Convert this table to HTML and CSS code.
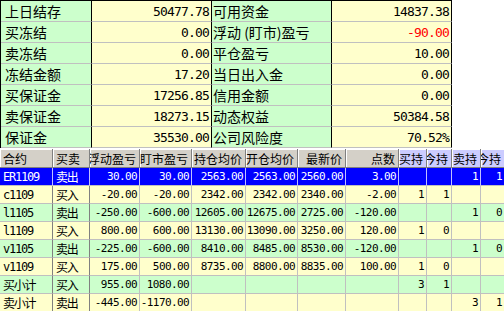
FILE: index.html
```html
<!DOCTYPE html>
<html lang="zh">
<head>
<meta charset="utf-8">
<title>资金</title>
<link rel="stylesheet" href="styles.css">
</head>
<body>
<div class="summary">
  <div class="lbl">上日结存</div><div class="val">50477.78</div><div class="lbl lbl2">可用资金</div><div class="val">14837.38</div>
  <div class="lbl">买冻结</div><div class="val">0.00</div><div class="lbl lbl2">浮动 (盯市)盈亏</div><div class="val neg">-90.00</div>
  <div class="lbl">卖冻结</div><div class="val">0.00</div><div class="lbl lbl2">平仓盈亏</div><div class="val">10.00</div>
  <div class="lbl">冻结金额</div><div class="val">17.20</div><div class="lbl lbl2">当日出入金</div><div class="val">0.00</div>
  <div class="lbl">买保证金</div><div class="val">17256.85</div><div class="lbl lbl2">信用金额</div><div class="val">0.00</div>
  <div class="lbl">卖保证金</div><div class="val">18273.15</div><div class="lbl lbl2">动态权益</div><div class="val">50384.58</div>
  <div class="lbl">保证金</div><div class="val">35530.00</div><div class="lbl lbl2">公司风险度</div><div class="val">70.52%</div>
</div>

<div class="grid">
  <div class="hd left dk">合约</div>
  <div class="hd left dk">买卖</div>
  <div class="hd">浮动盈亏</div>
  <div class="hd">盯市盈亏</div>
  <div class="hd">持仓均价</div>
  <div class="hd">开仓均价</div>
  <div class="hd">最新价</div>
  <div class="hd">点数</div>
  <div class="hd lav">买持</div>
  <div class="hd lav">今持</div>
  <div class="hd lav">卖持</div>
  <div class="hd lav">今持</div>

  <div class="c sel t dk">ER1109</div><div class="c sel t dk">卖出</div><div class="c sel">30.00</div><div class="c sel">30.00</div><div class="c sel">2563.00</div><div class="c sel">2563.00</div><div class="c sel">2560.00</div><div class="c sel">3.00</div><div class="c sel"></div><div class="c sel"></div><div class="c sel">1</div><div class="c sel">1</div>

  <div class="c y t dk">c1109</div><div class="c y t dk">买入</div><div class="c y">-20.00</div><div class="c y">-20.00</div><div class="c y">2342.00</div><div class="c y">2342.00</div><div class="c y">2340.00</div><div class="c y">-2.00</div><div class="c y">1</div><div class="c y">1</div><div class="c y"></div><div class="c y"></div>

  <div class="c g t dk">l1105</div><div class="c g t dk">卖出</div><div class="c g">-250.00</div><div class="c g">-600.00</div><div class="c g">12605.00</div><div class="c g">12675.00</div><div class="c g">2725.00</div><div class="c g">-120.00</div><div class="c g"></div><div class="c g"></div><div class="c g">1</div><div class="c g">0</div>

  <div class="c y t dk">l1109</div><div class="c y t dk">买入</div><div class="c y">800.00</div><div class="c y">600.00</div><div class="c y">13130.00</div><div class="c y">13090.00</div><div class="c y">3250.00</div><div class="c y">120.00</div><div class="c y">1</div><div class="c y">0</div><div class="c y"></div><div class="c y"></div>

  <div class="c g t dk">v1105</div><div class="c g t dk">卖出</div><div class="c g">-225.00</div><div class="c g">-600.00</div><div class="c g">8410.00</div><div class="c g">8485.00</div><div class="c g">8530.00</div><div class="c g">-120.00</div><div class="c g"></div><div class="c g"></div><div class="c g">1</div><div class="c g">0</div>

  <div class="c y t dk">v1109</div><div class="c y t dk">买入</div><div class="c y">175.00</div><div class="c y">500.00</div><div class="c y">8735.00</div><div class="c y">8800.00</div><div class="c y">8835.00</div><div class="c y">100.00</div><div class="c y">1</div><div class="c y">0</div><div class="c y"></div><div class="c y"></div>

  <div class="c g t dk">买小计</div><div class="c g t dk">买入</div><div class="c g">955.00</div><div class="c g">1080.00</div><div class="c g"></div><div class="c g"></div><div class="c g"></div><div class="c g"></div><div class="c g">3</div><div class="c g">1</div><div class="c g"></div><div class="c g"></div>

  <div class="c y t dk">卖小计</div><div class="c y t dk">卖出</div><div class="c y">-445.00</div><div class="c y">-1170.00</div><div class="c y"></div><div class="c y"></div><div class="c y"></div><div class="c y"></div><div class="c y"></div><div class="c y"></div><div class="c y">3</div><div class="c y">1</div>
</div>
</body>
</html>
```

FILE: styles.css
```css
html, body {
  margin: 0;
  padding: 0;
  background: #ffffff;
  overflow: hidden;
}
body {
  width: 504px;
  height: 311px;
  font-family: "Noto Sans CJK SC", sans-serif;
  color: #000;
}
.summary {
  display: grid;
  grid-template-columns: 91px 120px 120px 120px;
  width: 451px;
  border-left: 1px solid #000;
  border-top: 1px solid #000;
}
.lbl, .val {
  box-sizing: border-box;
  height: 21px;
  border-bottom: 1px solid #c0c0c0;
  border-right: 1px solid #000;
  white-space: nowrap;
  overflow: hidden;
  display: flex;
  align-items: center;
}
.lbl {
  background: #ccffcc;
  font-size: 14px;
  padding-left: 4px;
  line-height: 20px;
}
.lbl2 {
  padding-left: 1px;
}
.val {
  background: #ffffcc;
  justify-content: flex-end;
  padding-right: 2px;
  font-family: "DejaVu Sans Mono", monospace;
  font-size: 13px;
  letter-spacing: -0.83px;
}
.neg {
  color: #ff0000;
}
.grid {
  margin-top: 1px;
  display: grid;
  grid-template-columns: 53px 37px 50px 52px 54px 52px 48px 53px 28px 25px 29px 24px;
}
.hd {
  box-sizing: border-box;
  height: 19px;
  background: #d4d0c8;
  border-right: 1px solid #808080;
  border-bottom: 1px solid #808080;
  box-shadow: inset 1px 1px 0 #ffffff;
  font-size: 12px;
  display: flex;
  align-items: center;
  justify-content: flex-end;
  padding-right: 3px;
  white-space: nowrap;
  overflow: hidden;
}
.hd.left {
  justify-content: flex-start;
  padding-left: 3px;
  padding-right: 0;
}
.hd.lav {
  background: #ccccff;
}
.c {
  box-sizing: border-box;
  height: 18px;
  border-right: 1px solid #c0c0c0;
  border-bottom: 1px solid #c0c0c0;
  display: flex;
  align-items: center;
  justify-content: flex-end;
  padding: 0 2px;
  font-family: "DejaVu Sans Mono", monospace;
  font-size: 11px;
  letter-spacing: -0.6px;
  white-space: nowrap;
  overflow: hidden;
}
.c.t {
  justify-content: flex-start;
  padding-left: 3px;
  font-family: "DejaVu Sans Mono", "Noto Sans CJK SC", monospace;
  font-size: 12px;
  letter-spacing: -1.2px;
}
.c.dk, .hd.dk {
  border-right-color: #808080;
}
.c.y {
  background: #ffffcc;
}
.c.g {
  background: #ccffcc;
}
.c.sel {
  background: #0000ff;
  color: #ffffff;
  border-right-color: #c0c0ff;
  border-bottom-color: #c0c0c0;
}
```
